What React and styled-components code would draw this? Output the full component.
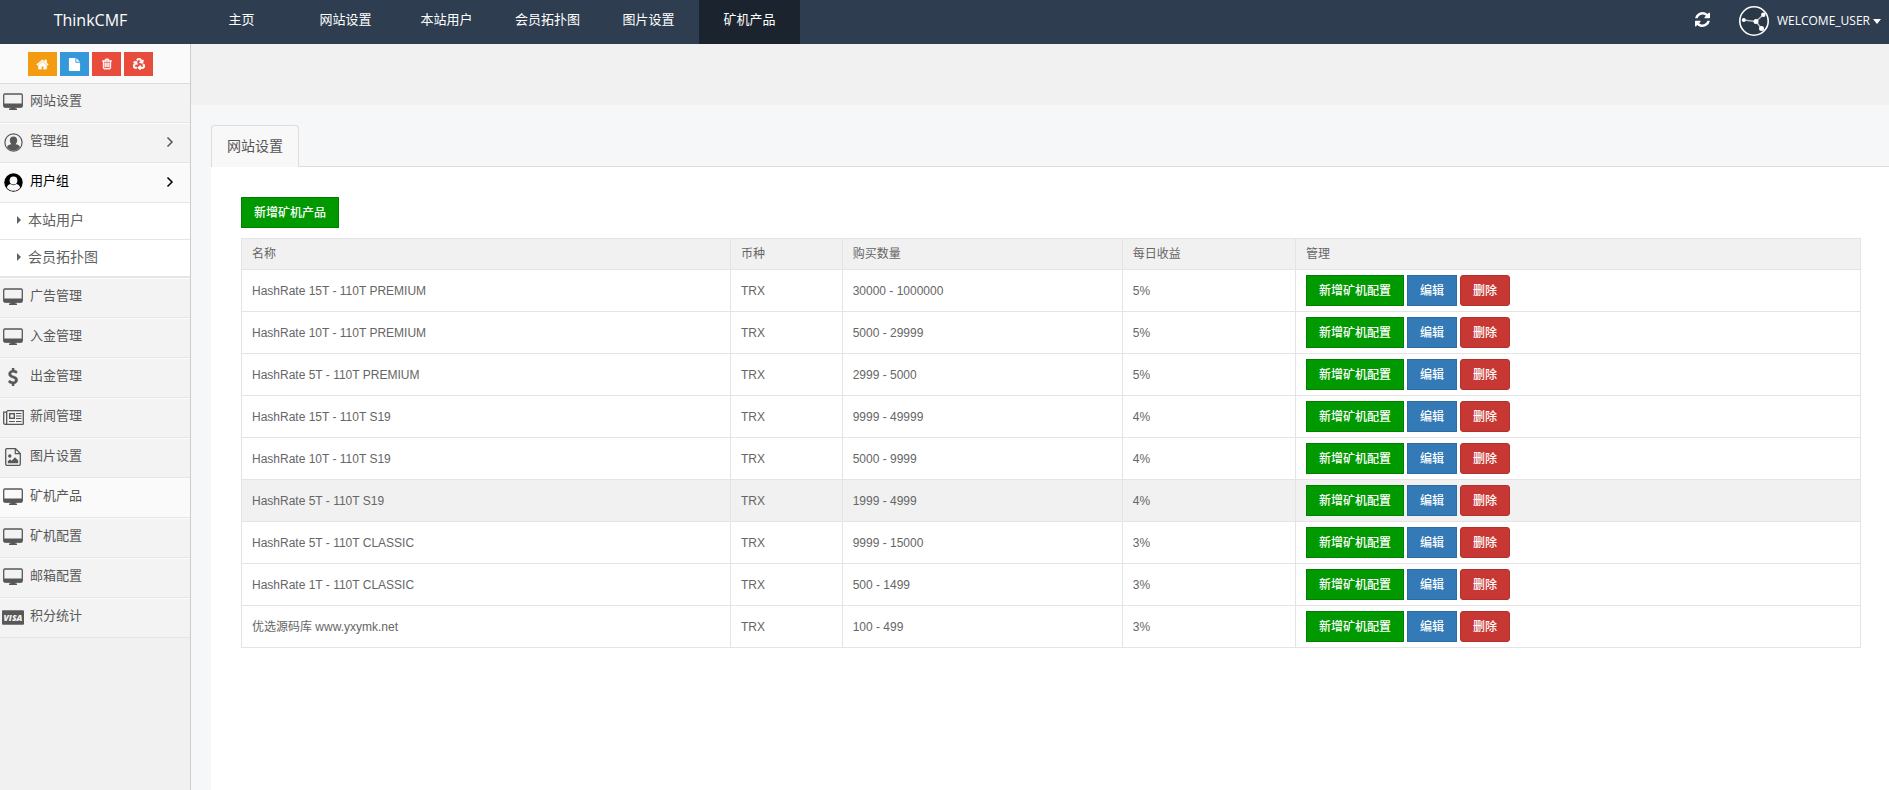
import React from "react";
import styled, { createGlobalStyle } from "styled-components";
import { FaRecycle } from "react-icons/fa";

const GlobalStyle = createGlobalStyle`
  * { box-sizing: border-box; }
  body {
    margin: 0;
    background: #f1f1f1;
    color: #666;
    font: 12px/18px "Liberation Sans", "Noto Sans CJK SC", sans-serif;
  }
  a { color: inherit; text-decoration: none; }
  ul { list-style: none; margin: 0; padding: 0; }
`;

const Page = styled.div`
  min-height: 100vh;
  display: flex;
  flex-direction: column;
`;

/* ---------- header ---------- */

const Header = styled.header`
  display: flex;
  height: 44px;
  background: #2e3e50;
  color: #fff;
`;

const Brand = styled.a`
  width: 191px;
  padding-right: 10px;
  text-align: center;
  font: 16px/41px "Open Sans", "Noto Sans CJK SC", sans-serif;
`;

const TopNav = styled.ul`
  display: flex;
  flex: 1;
`;

const TopTab = styled.a`
  display: block;
  width: 101px;
  height: 44px;
  font-size: 13px;
  line-height: 40px;
  text-align: center;
  background: ${(p) => (p.$active ? "#1b242e" : "transparent")};
`;

const TopItem = styled.li`
  &:first-child { margin-right: 3px; }
`;

const HeaderTools = styled.div`
  display: flex;
  align-items: center;
  padding: 0 8px 2px 0;
`;

const RefreshButton = styled.button`
  display: flex;
  border: 0;
  padding: 0;
  margin: 0 29px 4px 0;
  background: none;
  color: #fff;
`;

const UserButton = styled.button`
  display: flex;
  align-items: center;
  border: 0;
  padding: 0;
  background: none;
  color: #fff;
  font: 12px/18px "Open Sans", "Noto Sans CJK SC", sans-serif;
  svg:first-child { margin-right: 8px; }
  svg:last-child { margin-left: 3px; }
`;

/* ---------- sidebar ---------- */

const Body = styled.div`
  flex: 1;
  display: flex;
`;

const Sidebar = styled.aside`
  width: 191px;
  flex: none;
  background: #f1f1f1;
  border-right: 1px solid #ccc;
`;

const Shortcuts = styled.div`
  display: flex;
  gap: 3px;
  height: 40px;
  padding: 8px 0 0 28px;
  background: #fafafa;
  border-bottom: 1px solid #ddd;
`;

const Shortcut = styled.button`
  display: flex;
  align-items: center;
  justify-content: center;
  width: 29px;
  height: 24px;
  padding: 0;
  border: 0;
  color: #fff;
  background: ${(p) => p.$color};
`;

const MenuLink = styled.a`
  display: flex;
  align-items: center;
  height: 40px;
  padding: 0 16px 2px 2px;
  border-top: 1px solid #fcfcfc;
  border-bottom: 1px solid #e5e5e5;
  font-size: 13px;
  color: ${(p) => (p.$open ? "#000" : "#585858")};
  background: ${(p) => (p.$light ? "#fafafa" : "#f3f3f3")};
`;

const MenuItem = styled.li`
  &:first-child > ${MenuLink} {
    height: 39px;
    border-top: 0;
  }
`;

const MenuIcon = styled.span`
  display: flex;
  justify-content: center;
  width: 22px;
  margin-right: 6px;
`;

const MenuText = styled.span`
  flex: 1;
  padding-bottom: 2px;
`;

const SubMenu = styled.ul`
  border-bottom: 1px solid #e5e5e5;
`;

const SubLink = styled.a`
  display: flex;
  align-items: center;
  gap: 7px;
  height: 37px;
  padding: 0 0 2px 17px;
  border-bottom: 1px solid #e5e5e5;
  background: #fff;
  color: #616161;
  font-size: 14px;
`;

/* ---------- main area ---------- */

const Main = styled.main`
  flex: 1;
  display: flex;
  flex-direction: column;
  background: #f6f7f9;
`;

const Strip = styled.div`
  height: 61px;
  background: #f1f1f1;
`;

const Workspace = styled.section`
  flex: 1;
  display: flex;
  flex-direction: column;
  padding: 20px 0 0 20px;
`;

const Tabs = styled.nav`
  display: flex;
  border-bottom: 1px solid #ddd;
`;

const Tab = styled.a`
  height: 42px;
  margin-bottom: -1px;
  padding: 0 15px;
  border: 1px solid #ddd;
  border-bottom: 0;
  border-radius: 4px 4px 0 0;
  background: #f8f8f8;
  color: #555;
  font-size: 14px;
  line-height: 40px;
`;

const Panel = styled.div`
  flex: 1;
  padding: 30px 28px 30px 30px;
  background: #fff;
`;

const skins = {
  green: "background: #009900; border-color: #008000;",
  blue: "background: #337ab7; border-color: #2e6da4;",
  red: "background: #c73834; border-color: #b3312d; border-radius: 3px;",
};

const Button = styled.button`
  height: 31px;
  padding: 0 12px;
  border: 1px solid;
  color: #fff;
  font: 500 12px/18px "Liberation Sans", "Noto Sans CJK SC", sans-serif;
  ${(p) => skins[p.$skin]}
`;

const Table = styled.table`
  width: 100%;
  margin-top: 10px;
  border-collapse: collapse;
  table-layout: fixed;
`;

const Col = styled.col`
  width: ${(p) => p.$width};
`;

const Th = styled.th`
  height: 31px;
  padding: 0 10px;
  border: 1px solid #e4e4e4;
  background: #f1f1f1;
  font-weight: 400;
  text-align: left;
`;

const Td = styled.td`
  height: 42px;
  padding: 5px 10px;
  border: 1px solid #e4e4e4;
`;

const Row = styled.tr`
  background: ${(p) => (p.$hovered ? "#f1f1f1" : "#fff")};
`;

const Actions = styled.div`
  display: flex;
  gap: 3px;
`;

/* ---------- icons ---------- */

const Glyph = ({ d, size = 13, box = "0 0 1792 1792", weight = 0 }) => (
  <svg width={size} height={size} viewBox={box} fill="currentColor" stroke="currentColor" strokeWidth={weight} aria-hidden="true">
    <path d={d} />
  </svg>
);

const paths = {
  home: "M1472 992v480q0 26-19 45t-45 19h-384v-384h-256v384h-384q-26 0-45-19t-19-45v-480q0-1 .5-3t.5-3l575-474 575 474q1 2 1 6zm223-69l-62 74q-8 9-21 11h-3q-13 0-21-7l-692-577-692 577q-12 8-24 7-13-2-21-11l-62-74q-8-10-7-23.5t11-21.5l719-599q32-26 76-26t76 26l244 204v-195q0-14 9-23t23-9h192q14 0 23 9t9 23v408l219 182q10 8 11 21.5t-7 23.5z",
  file: "M1152 512v-472q22 14 36 28l408 408q14 14 28 36h-472zm-128 32q0 40 28 68t68 28h544v1056q0 40-28 68t-68 28h-1344q-40 0-68-28t-28-68v-1600q0-40 28-68t68-28h800v544z",
  trash: "M704 736v576q0 14-9 23t-23 9h-64q-14 0-23-9t-9-23v-576q0-14 9-23t23-9h64q14 0 23 9t9 23zm256 0v576q0 14-9 23t-23 9h-64q-14 0-23-9t-9-23v-576q0-14 9-23t23-9h64q14 0 23 9t9 23zm256 0v576q0 14-9 23t-23 9h-64q-14 0-23-9t-9-23v-576q0-14 9-23t23-9h64q14 0 23 9t9 23zm128 724v-948h-896v948q0 22 7 40.5t14.5 27 10.5 8.5h832q3 0 10.5-8.5t14.5-27 7-40.5zm-672-1076h448l-48-117q-7-9-17-11h-317q-10 2-17 11zm928 32v64q0 14-9 23t-23 9h-96v948q0 83-47 143.5t-113 60.5h-832q-66 0-113-58.5t-47-141.5v-952h-96q-14 0-23-9t-9-23v-64q0-14 9-23t23-9h309l70-167q15-37 54-63t79-26h320q40 0 79 26t54 63l70 167h309q14 0 23 9t9 23z",
  dollar: "M1362 1185q0 153-99.5 263.5t-258.5 136.5v175q0 14-9 23t-23 9h-135q-13 0-22.5-9.5t-9.5-22.5v-175q-66-9-127.5-31t-101.5-44.5-74-48-46.5-37.5-17.5-18q-17-21-2-41l103-135q7-10 23-12 15-2 24 9l2 2q113 99 243 125 37 8 74 8 81 0 142.5-43t61.5-122q0-28-15-53t-33.5-42-58.5-37.5-66-32-80-32.5q-39-16-61.5-25t-61.5-26.5-62.5-31-56.5-35.5-53.5-42.5-43.5-49-35.5-58-21-66.5-8.5-78q0-138 98-242t255-134v-180q0-13 9.5-22.5t22.5-9.5h135q14 0 23 9t9 23v176q57 6 110.5 23t87 33.5 63.5 37.5 39 29 15 14q17 18 5 38l-81 146q-8 15-23 16-14 3-27-7-3-3-14.5-12t-39-26.5-58.5-32-74.5-26-85.5-11.5q-95 0-155 43t-60 111q0 26 8.5 48t29.5 41.5 39.5 33 56 31 60.5 27 70 27.5q53 20 81 31.5t76 35 75.5 42.5 62 50 53 63.5 31.5 76.5 13 94z",
  refresh: "M1511 1056q0 5-1 7q-64 268-268 434.5t-478 166.5q-146 0-282.5-55t-243.5-157l-129 129q-19 19-45 19t-45-19t-19-45v-448q0-26 19-45t45-19h448q26 0 45 19t19 45t-19 45l-137 137q71 66 161 102t187 36q134 0 250-65t186-179q11-17 53-117q8-23 30-23h192q13 0 22.5 9.5t9.5 22.5zM1536 256v448q0 26-19 45t-45 19h-448q-26 0-45-19t-19-45t19-45l138-138q-148-137-349-137q-134 0-250 65t-186 179q-11 17-53 117q-8 23-30 23h-199q-13 0-22.5-9.5t-9.5-22.5v-7q65-268 270-434.5t480-166.5q146 0 284 55.5t245 156.5l130-129q19-19 45-19t45 19t19 45z",
};

const DesktopIcon = () => (
  <svg width="20" height="19" viewBox="0 0 20 19" fill="none" aria-hidden="true">
    <rect x="0.7" y="1" width="18.6" height="13" rx="1.2" stroke="currentColor" strokeWidth="1.3" />
    <path d="M1 10.500h18v3.100q0 .9-.9.9H1.900q-.9 0-.9-.9zM7.500 14h5v1.500h1.500V17H6v-1.500h1.500z" fill="currentColor" />
  </svg>
);

const PersonIcon = () => (
  <svg width="19" height="19" viewBox="0 0 19 19" fill="none" aria-hidden="true">
    <circle cx="9.500" cy="9.500" r="8.600" stroke="currentColor" strokeWidth="1.200" />
    <path d="M9.500 3.500c2.300 0 3.700 1.600 3.700 3.800 0 1.500-.6 3-1.600 3.900 2 .3 3.700 1 4.400 2.700-1.500 2-3.700 3.500-6.500 3.500S4.500 15.900 3 13.900c.7-1.700 2.400-2.400 4.400-2.700-1-.9-1.600-2.400-1.600-3.900 0-2.200 1.400-3.800 3.700-3.800z" fill="currentColor" />
  </svg>
);

const GroupIcon = () => (
  <svg width="19" height="19" viewBox="0 0 19 19" aria-hidden="true">
    <circle cx="9.500" cy="9.500" r="9.200" fill="currentColor" />
    <path d="M9.500 17.800c-2.800 0-5.200-1.200-6.600-3.100.3-2 1.600-3.200 3.600-3.600 1.900 1.500 4.100 1.500 6 0 2 .4 3.300 1.600 3.600 3.600-1.400 1.900-3.800 3.100-6.600 3.100z" fill="#fafafa" />
    <circle cx="9.500" cy="7.500" r="3.900" fill="#fafafa" />
  </svg>
);

const NewsIcon = () => (
  <svg width="21" height="15" viewBox="0 0 21 15" fill="none" stroke="currentColor" aria-hidden="true">
    <path d="M4 .7h16.300v13q0 .6-.6.6H2.200Q.7 14.300.7 13V2.200H4M3.700 1v12q0 1-1 1.200" strokeWidth="1.300" />
    <rect x="6.700" y="3.700" width="4.600" height="4.600" strokeWidth="1.400" />
    <path d="M13 3.500h5.500M13 6h5.500M13 8.500h5.500M6 11.500h5.800M13 11.500h5.500" strokeWidth="1.100" />
  </svg>
);

const PictureIcon = () => (
  <svg width="16" height="18" viewBox="0 0 16 18" fill="none" aria-hidden="true">
    <path d="M1.700.7H10.500L15.300 5.500V16.300q0 1-1 1H1.700q-1 0-1-1V1.700q0-1 1-1z" stroke="currentColor" strokeWidth="1.300" />
    <path d="M10.300.9V5.700H15" stroke="currentColor" strokeWidth="1.200" />
    <circle cx="4.800" cy="8" r="1.700" fill="currentColor" />
    <path d="M2.800 15.300v-2L5 11.200l1.600 1.500L10 9.300l3.200 3.200v2.800z" fill="currentColor" />
  </svg>
);

const DollarIcon = () => <Glyph d={paths.dollar} size={18} weight={40} />;

const VisaIcon = () => (
  <svg width="23" height="15" viewBox="0 0 23 15" aria-hidden="true">
    <rect width="23" height="15" rx="1" fill="currentColor" />
    <text x="11.500" y="11" fill="#f3f3f3" textAnchor="middle" fontFamily="Open Sans, sans-serif" fontSize="9" fontStyle="italic" fontWeight="800">VISA</text>
  </svg>
);

const Chevron = () => (
  <svg width="8" height="12" viewBox="0 0 8 12" fill="none" stroke="currentColor" strokeWidth="1.500" aria-hidden="true">
    <path d="M1.500 1.500 6 6l-4.500 4.500" />
  </svg>
);

const Marker = () => (
  <svg width="4" height="8" viewBox="0 0 4 8" fill="currentColor" aria-hidden="true">
    <path d="M0 0 4 4 0 8z" />
  </svg>
);

const Caret = () => (
  <svg width="8" height="5" viewBox="0 0 8 5" fill="currentColor" aria-hidden="true">
    <path d="M0 0h8L4 5z" />
  </svg>
);

const Avatar = () => (
  <svg width="30" height="30" viewBox="0 0 30 30" fill="none" aria-hidden="true">
    <circle cx="15" cy="15" r="14.200" fill="#2a3847" stroke="#fff" strokeWidth="1.600" />
    <path d="M4.500 14 17 15.500 24 9M17 15.500 22.500 22.500" stroke="#b9bfc5" strokeWidth="1.500" />
    <circle cx="4.800" cy="14" r="2" fill="#fff" />
    <circle cx="17" cy="15.500" r="2.500" fill="#fff" />
    <circle cx="24.300" cy="8.700" r="2.200" fill="#fff" />
    <circle cx="22.500" cy="22.500" r="2.500" fill="#fff" />
  </svg>
);

/* ---------- data ---------- */

const topItems = ["主页", "网站设置", "本站用户", "会员拓扑图", "图片设置", "矿机产品"];

const menu = [
  { text: "网站设置", Icon: DesktopIcon },
  { text: "管理组", Icon: PersonIcon, group: true },
  { text: "用户组", Icon: GroupIcon, group: true, open: true, children: ["本站用户", "会员拓扑图"] },
  { text: "广告管理", Icon: DesktopIcon },
  { text: "入金管理", Icon: DesktopIcon },
  { text: "出金管理", Icon: DollarIcon },
  { text: "新闻管理", Icon: NewsIcon },
  { text: "图片设置", Icon: PictureIcon },
  { text: "矿机产品", Icon: DesktopIcon, current: true },
  { text: "矿机配置", Icon: DesktopIcon },
  { text: "邮箱配置", Icon: DesktopIcon },
  { text: "积分统计", Icon: VisaIcon },
];

const columns = [
  ["名称", "30.2%"],
  ["币种", "6.9%"],
  ["购买数量", "17.3%"],
  ["每日收益", "10.7%"],
  ["管理", "auto"],
];

const products = [
  ["HashRate 15T - 110T PREMIUM", "TRX", "30000 - 1000000", "5%"],
  ["HashRate 10T - 110T PREMIUM", "TRX", "5000 - 29999", "5%"],
  ["HashRate 5T - 110T PREMIUM", "TRX", "2999 - 5000", "5%"],
  ["HashRate 15T - 110T S19", "TRX", "9999 - 49999", "4%"],
  ["HashRate 10T - 110T S19", "TRX", "5000 - 9999", "4%"],
  ["HashRate 5T - 110T S19", "TRX", "1999 - 4999", "4%"],
  ["HashRate 5T - 110T CLASSIC", "TRX", "9999 - 15000", "3%"],
  ["HashRate 1T - 110T CLASSIC", "TRX", "500 - 1499", "3%"],
  ["优选源码库 www.yxymk.net", "TRX", "100 - 499", "3%"],
];

export default function App() {
  return (
    <Page>
      <GlobalStyle />
      <Header>
        <Brand href="#">ThinkCMF</Brand>
        <TopNav>
          {topItems.map((text) => (
            <TopItem key={text}>
              <TopTab href="#" $active={text === "矿机产品"}>{text}</TopTab>
            </TopItem>
          ))}
        </TopNav>
        <HeaderTools>
          <RefreshButton aria-label="刷新">
            <Glyph d={paths.refresh} size={15} box="0 128 1536 1536" />
          </RefreshButton>
          <UserButton>
            <Avatar />
            WELCOME_USER
            <Caret />
          </UserButton>
        </HeaderTools>
      </Header>

      <Body>
        <Sidebar>
          <Shortcuts>
            <Shortcut $color="#f39c12" aria-label="首页"><Glyph d={paths.home} weight={40} /></Shortcut>
            <Shortcut $color="#3498db" aria-label="文件"><Glyph d={paths.file} /></Shortcut>
            <Shortcut $color="#e74c3c" aria-label="清除"><Glyph d={paths.trash} size={12} weight={70} /></Shortcut>
            <Shortcut $color="#e74c3c" aria-label="回收站"><FaRecycle size={12} stroke="#fff" strokeWidth={30} /></Shortcut>
          </Shortcuts>
          <ul>
            {menu.map(({ text, Icon, group, open, current, children }) => (
              <MenuItem key={text}>
                <MenuLink href="#" $open={open} $light={open || current}>
                  <MenuIcon><Icon /></MenuIcon>
                  <MenuText>{text}</MenuText>
                  {group && <Chevron />}
                </MenuLink>
                {children && (
                  <SubMenu>
                    {children.map((child) => (
                      <li key={child}>
                        <SubLink href="#"><Marker />{child}</SubLink>
                      </li>
                    ))}
                  </SubMenu>
                )}
              </MenuItem>
            ))}
          </ul>
        </Sidebar>

        <Main>
          <Strip />
          <Workspace>
            <Tabs>
              <Tab href="#">网站设置</Tab>
            </Tabs>
            <Panel>
              <Button $skin="green">新增矿机产品</Button>
              <Table>
                <colgroup>
                  {columns.map(([name, width]) => <Col key={name} $width={width} />)}
                </colgroup>
                <thead>
                  <tr>{columns.map(([name]) => <Th key={name}>{name}</Th>)}</tr>
                </thead>
                <tbody>
                  {products.map((cells, row) => (
                    <Row key={cells[0]} $hovered={row === 5}>
                      {cells.map((cell, i) => <Td key={i}>{cell}</Td>)}
                      <Td>
                        <Actions>
                          <Button $skin="green">新增矿机配置</Button>
                          <Button $skin="blue">编辑</Button>
                          <Button $skin="red">删除</Button>
                        </Actions>
                      </Td>
                    </Row>
                  ))}
                </tbody>
              </Table>
            </Panel>
          </Workspace>
        </Main>
      </Body>
    </Page>
  );
}
